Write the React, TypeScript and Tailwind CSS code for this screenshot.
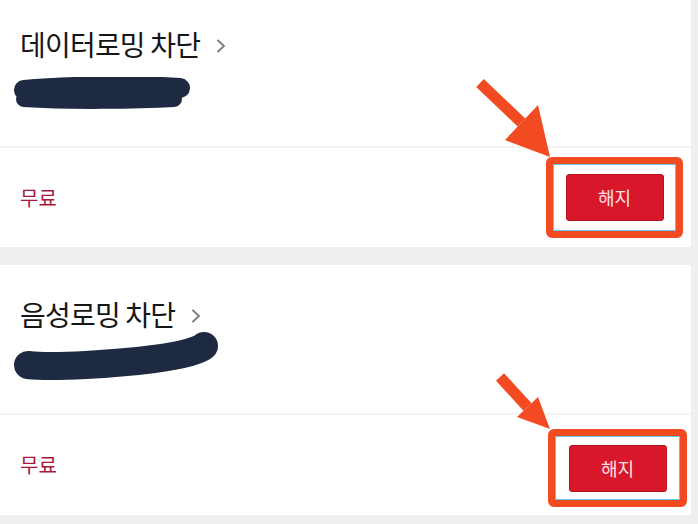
import React from 'react'

const font = { fontFamily: '"Noto Sans CJK KR", "Noto Sans", sans-serif' }

// ── Annotation arrow (orange, drawn over the card) ───────────────────────────
function Arrow({ tail, base1, base2, tip }: { tail: [number, number]; base1: [number, number]; base2: [number, number]; tip: [number, number] }): React.ReactElement {
  const mid: [number, number] = [(base1[0] + base2[0]) / 2, (base1[1] + base2[1]) / 2]
  return (
    <g>
      <line x1={tail[0]} y1={tail[1]} x2={mid[0]} y2={mid[1]} stroke="#f24b22" strokeWidth={11} />
      <polygon points={`${base1[0]},${base1[1]} ${base2[0]},${base2[1]} ${tip[0]},${tip[1]}`} fill="#f24b22" />
    </g>
  )
}

interface CardProps {
  title: string
  scribble: React.ReactElement
  topClass: string
  boxClass: string
  rowClass: string
}

function RoamingCard({ title, scribble, topClass, boxClass, rowClass }: CardProps): React.ReactElement {
  return (
    <div className="bg-white w-[691px]">
      <div className={topClass}>
        <div className="flex items-center gap-[15px] pl-[20px]">
          <span className="text-[28px] leading-none tracking-[-0.8px] text-[#161616]">{title}</span>
          <svg width="12" height="16" viewBox="0 0 12 16" className="mt-[4px]">
            <path d="M2.5 2 L9 8 L2.5 14" fill="none" stroke="#7a7a7a" strokeWidth="1.8" />
          </svg>
        </div>
        {scribble}
      </div>
      <div className="h-[2px] bg-[#f3f3f3]" />
      <div className={rowClass}>
        <span className="pl-[20px] text-[20px] text-[#a8163a]">무료</span>
        <div className={boxClass}>
          <div className="border-[1.5px] border-[#5ec3f0] bg-white h-full flex items-center justify-center">
            <button className="w-[98px] h-[47px] rounded-[3px] bg-[#d8182a] border border-[#b5141f] text-[#fbe3e6] text-[18px]">
              해지
            </button>
          </div>
        </div>
      </div>
    </div>
  )
}

export default function App(): React.ReactElement {
  return (
    <div className="relative w-[698px] h-[524px] bg-[#efefef] overflow-hidden" style={font}>
      <div className="flex flex-col gap-[18px]">
        <RoamingCard
          title="데이터로밍 차단"
          topClass="h-[146px] pt-[30px]"
          rowClass="h-[99px] flex items-center justify-between pr-[8px]"
          boxClass="w-[137px] h-[81px] border-[7px] border-[#f24b22] rounded-[6px]"
          scribble={
            <svg width="200" height="36" viewBox="0 0 200 36" className="mt-[19px] ml-[8px]">
              <path d="M16 13 C 60 9, 130 8, 172 11" fill="none" stroke="#1e2a41" strokeWidth="20" strokeLinecap="round" />
              <path d="M16 22 C 60 25, 130 24, 166 22" fill="none" stroke="#1e2a41" strokeWidth="16" strokeLinecap="round" />
            </svg>
          }
        />
        <RoamingCard
          title="음성로밍 차단"
          topClass="h-[148px] pt-[35px]"
          rowClass="h-[100px] flex items-center justify-between pr-[4px]"
          boxClass="w-[139px] h-[78px] border-[7px] border-[#f24b22] rounded-[6px] mt-[6px]"
          scribble={
            <svg width="220" height="50" viewBox="0 0 220 50" className="mt-[4px] ml-[4px]">
              <path d="M24 33 C 50 36, 110 32, 150 27 C 180 23, 196 18, 200 14" fill="none" stroke="#1e2a41" strokeWidth="28" strokeLinecap="round" />
            </svg>
          }
        />
      </div>
      <svg className="absolute left-0 top-0 pointer-events-none" width="698" height="524" viewBox="0 0 698 524">
        <Arrow tail={[480, 83]} base1={[505, 140]} base2={[538, 105]} tip={[550, 157]} />
        <Arrow tail={[500, 377]} base1={[517, 417]} base2={[538, 397]} tip={[550, 429]} />
      </svg>
    </div>
  )
}
